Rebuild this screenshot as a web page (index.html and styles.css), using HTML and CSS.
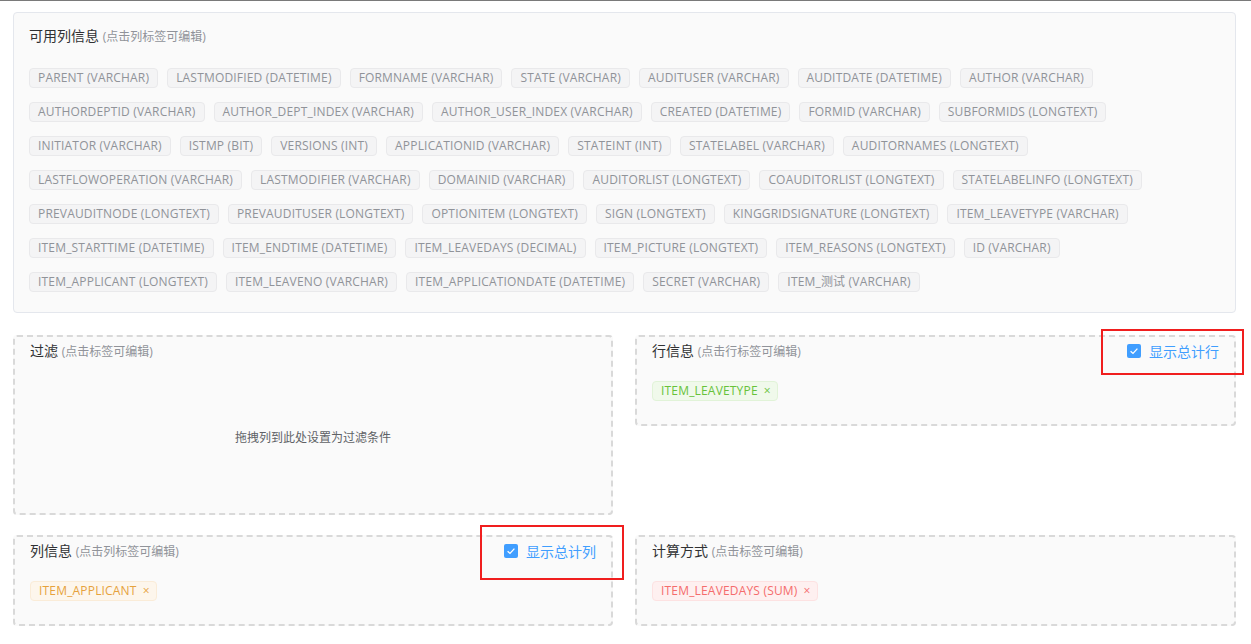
FILE: index.html
```html
<!DOCTYPE html>
<html lang="zh-CN">
<head>
    <meta charset="UTF-8">
    <meta name="viewport" content="width=device-width, initial-scale=1.0">
    <title>报表字段设置</title>
    <link rel="stylesheet" href="styles.css">
</head>
<body>
    <div class="page">
        <!-- Available columns -->
        <div class="fields-panel">
            <div class="panel-title">可用列信息 <small>(点击列标签可编辑)</small></div>
            <div class="tag-list">
                <span class="tag">PARENT (VARCHAR)</span>
                <span class="tag">LASTMODIFIED (DATETIME)</span>
                <span class="tag">FORMNAME (VARCHAR)</span>
                <span class="tag">STATE (VARCHAR)</span>
                <span class="tag">AUDITUSER (VARCHAR)</span>
                <span class="tag">AUDITDATE (DATETIME)</span>
                <span class="tag">AUTHOR (VARCHAR)</span>
                <span class="tag">AUTHORDEPTID (VARCHAR)</span>
                <span class="tag">AUTHOR_DEPT_INDEX (VARCHAR)</span>
                <span class="tag">AUTHOR_USER_INDEX (VARCHAR)</span>
                <span class="tag">CREATED (DATETIME)</span>
                <span class="tag">FORMID (VARCHAR)</span>
                <span class="tag">SUBFORMIDS (LONGTEXT)</span>
                <span class="tag">INITIATOR (VARCHAR)</span>
                <span class="tag">ISTMP (BIT)</span>
                <span class="tag">VERSIONS (INT)</span>
                <span class="tag">APPLICATIONID (VARCHAR)</span>
                <span class="tag">STATEINT (INT)</span>
                <span class="tag">STATELABEL (VARCHAR)</span>
                <span class="tag">AUDITORNAMES (LONGTEXT)</span>
                <span class="tag">LASTFLOWOPERATION (VARCHAR)</span>
                <span class="tag">LASTMODIFIER (VARCHAR)</span>
                <span class="tag">DOMAINID (VARCHAR)</span>
                <span class="tag">AUDITORLIST (LONGTEXT)</span>
                <span class="tag">COAUDITORLIST (LONGTEXT)</span>
                <span class="tag">STATELABELINFO (LONGTEXT)</span>
                <span class="tag">PREVAUDITNODE (LONGTEXT)</span>
                <span class="tag">PREVAUDITUSER (LONGTEXT)</span>
                <span class="tag">OPTIONITEM (LONGTEXT)</span>
                <span class="tag">SIGN (LONGTEXT)</span>
                <span class="tag">KINGGRIDSIGNATURE (LONGTEXT)</span>
                <span class="tag">ITEM_LEAVETYPE (VARCHAR)</span>
                <span class="tag">ITEM_STARTTIME (DATETIME)</span>
                <span class="tag">ITEM_ENDTIME (DATETIME)</span>
                <span class="tag">ITEM_LEAVEDAYS (DECIMAL)</span>
                <span class="tag">ITEM_PICTURE (LONGTEXT)</span>
                <span class="tag">ITEM_REASONS (LONGTEXT)</span>
                <span class="tag">ID (VARCHAR)</span>
                <span class="tag">ITEM_APPLICANT (LONGTEXT)</span>
                <span class="tag">ITEM_LEAVENO (VARCHAR)</span>
                <span class="tag">ITEM_APPLICATIONDATE (DATETIME)</span>
                <span class="tag">SECRET (VARCHAR)</span>
                <span class="tag">ITEM_测试 (VARCHAR)</span>
            </div>
        </div>

        <div class="drop-grid">
            <!-- Filter -->
            <div class="drop-panel filter-panel">
                <div class="drop-head">
                    <div class="panel-title">过滤 <small>(点击标签可编辑)</small></div>
                </div>
                <div class="drop-body empty">拖拽列到此处设置为过滤条件</div>
            </div>

            <!-- Rows -->
            <div class="drop-panel">
                <div class="drop-head">
                    <div class="panel-title">行信息 <small>(点击行标签可编辑)</small></div>
                    <label class="check marked marked-row">
                        <span class="check-box">
                            <svg viewBox="0 0 14 14" width="14" height="14"><path d="M3.6 7.2 L6 9.4 L10.4 4.6" fill="none" stroke="#fff" stroke-width="1.3"/></svg>
                        </span>
                        显示总计行
                    </label>
                </div>
                <div class="drop-body">
                    <span class="tag tag-success">ITEM_LEAVETYPE <i class="tag-close">×</i></span>
                </div>
            </div>

            <!-- Columns -->
            <div class="drop-panel">
                <div class="drop-head">
                    <div class="panel-title">列信息 <small>(点击列标签可编辑)</small></div>
                    <label class="check marked marked-col">
                        <span class="check-box">
                            <svg viewBox="0 0 14 14" width="14" height="14"><path d="M3.6 7.2 L6 9.4 L10.4 4.6" fill="none" stroke="#fff" stroke-width="1.3"/></svg>
                        </span>
                        显示总计列
                    </label>
                </div>
                <div class="drop-body">
                    <span class="tag tag-warning">ITEM_APPLICANT <i class="tag-close">×</i></span>
                </div>
            </div>

            <!-- Aggregation -->
            <div class="drop-panel">
                <div class="drop-head">
                    <div class="panel-title">计算方式 <small>(点击标签可编辑)</small></div>
                </div>
                <div class="drop-body">
                    <span class="tag tag-danger">ITEM_LEAVEDAYS (SUM) <i class="tag-close">×</i></span>
                </div>
            </div>
        </div>
    </div>
</body>
</html>
```

FILE: styles.css
```css
body {
    margin: 0;
    font-family: "Open Sans", "Noto Sans CJK SC", sans-serif;
    color: #303133;
    background-color: #fff;
    border-top: 1px solid #7a7a7a;
}
.page {
    padding: 11px 15px 0 13px;
}

.panel-title {
    font-size: 14px;
    line-height: 20px;
    color: #303133;
}
.panel-title small {
    font-size: 12px;
    color: #909399;
}

/* Available columns */
.fields-panel {
    padding: 13px 15px 20px;
    border: 1px solid #e4e7ed;
    border-radius: 4px;
    background-color: #fafafa;
    margin-bottom: 22px;
}
.tag-list {
    display: flex;
    flex-wrap: wrap;
    gap: 14px 9px;
    margin-top: 21px;
}
.tag {
    display: inline-flex;
    align-items: center;
    height: 20px;
    padding: 0 8px;
    font-size: 12px;
    letter-spacing: 0.18px;
    line-height: 18px;
    white-space: nowrap;
    color: #909399;
    background-color: #f4f4f5;
    border: 1px solid #e9e9eb;
    border-radius: 4px;
    box-sizing: border-box;
}
.tag-success {
    color: #67c23a;
    background-color: #f0f9eb;
    border-color: #e1f3d8;
}
.tag-warning {
    color: #e6a23c;
    background-color: #fdf6ec;
    border-color: #faecd8;
}
.tag-danger {
    color: #f56c6c;
    background-color: #fef0f0;
    border-color: #fde2e2;
}
.tag-close {
    font-style: normal;
    font-size: 12px;
    margin-left: 6px;
    margin-right: -2px;
}

/* Drop zones */
.drop-grid {
    display: grid;
    grid-template-columns: 600px 1fr;
    gap: 20px 22px;
    align-items: start;
}
.drop-panel {
    display: flex;
    flex-direction: column;
    padding: 4px 15px 0;
    border: 2px dashed #d9d9d9;
    border-radius: 4px;
    background-color: #fafafa;
}
.drop-head {
    display: flex;
    justify-content: space-between;
    align-items: center;
    height: 20px;
}
.drop-body {
    display: flex;
    align-items: flex-start;
    padding: 20px 0 23px;
}
.filter-panel {
    height: 180px;
    box-sizing: border-box;
}
.filter-panel .drop-body {
    flex: 1;
    align-items: center;
    justify-content: center;
    padding: 0;
    font-size: 12px;
    color: #606266;
}

/* Checkbox */
.check {
    position: relative;
    display: flex;
    align-items: center;
    font-size: 14px;
    color: #409eff;
    cursor: pointer;
}
.check-box {
    display: inline-flex;
    width: 14px;
    height: 14px;
    margin-right: 8px;
    border-radius: 2px;
    background-color: #409eff;
}

/* Red outline around the total switches */
.marked::after {
    content: "";
    position: absolute;
    border: 2px solid #f01e1e;
}
.marked-row::after {
    left: -26px;
    right: -25px;
    top: -12px;
    bottom: -14px;
}
.marked-col::after {
    left: -24px;
    right: -28px;
    top: -16px;
    bottom: -19px;
}
```
